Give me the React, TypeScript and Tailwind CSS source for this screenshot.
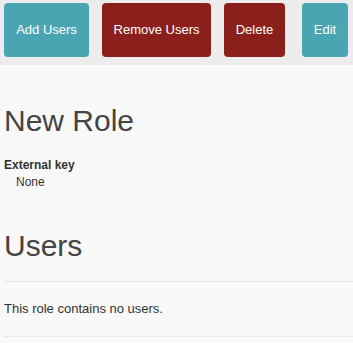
import React from 'react';

const font = { fontFamily: '"Liberation Sans", Arial, sans-serif' };

export default function App() {
  return (
    <div className="min-h-[343px] w-full bg-[#f9f9f9] text-[#333]" style={font}>
      {/* Action bar */}
      <div className="flex items-start bg-[#ececec] pt-[3px] pb-[8px]">
        <button className="ml-[4px] h-[54px] w-[85px] rounded-[4px] bg-[#4aa5b3] text-[13px] text-white">
          Add Users
        </button>
        <button className="ml-[13px] h-[54px] w-[109px] rounded-[4px] bg-[#8a1f1c] text-[13px] text-white">
          Remove Users
        </button>
        <button className="ml-[13px] h-[54px] w-[61px] rounded-[4px] bg-[#8a1f1c] text-[13px] text-white">
          Delete
        </button>
        <button className="ml-[17px] h-[54px] w-[46px] rounded-[4px] bg-[#4aa5b3] text-[13px] text-white">
          Edit
        </button>
      </div>

      <div className="pl-[4px]">
        <h1 className="mt-[39px] text-[30px] leading-[33px] text-[#444]">New Role</h1>
        <dl className="mt-[20px] text-[12px] leading-[17px]">
          <dt className="font-bold">External key</dt>
          <dd className="pl-[12px]">None</dd>
        </dl>

        <h2 className="mt-[38px] text-[30px] leading-[33px] text-[#444]">Users</h2>
        <hr className="mt-[19px] border-[#e6e6e6]" />
        <p className="my-[18px] text-[13px] leading-[18px]">This role contains no users.</p>
        <hr className="border-[#e6e6e6]" />
      </div>
    </div>
  );
}
